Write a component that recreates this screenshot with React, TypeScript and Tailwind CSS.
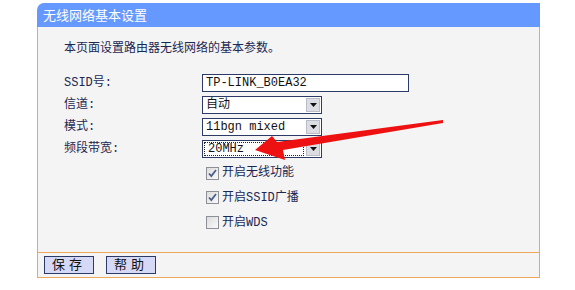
import React from 'react';

const mono = { fontFamily: '"Liberation Mono", "Noto Sans CJK SC", monospace' };

function SelectBox({ value, focused }: { value: string; focused?: boolean }) {
  return (
    <div className="flex h-[18px] w-[120px] items-stretch border border-[#2b3a67] bg-white">
      <div
        className={
          'flex flex-1 items-center pl-[3px] text-[12px] leading-none text-[#111] ' +
          (focused ? 'm-[1px] border border-dotted border-[#222]' : '')
        }
      >
        {value}
      </div>
      <div className="m-[1px] flex w-[14px] items-center justify-center border border-[#b8bcc8] bg-[#dcdde2]">
        <svg width="7" height="4" viewBox="0 0 7 4">
          <path d="M0 0h7L3.5 4z" fill="#111" />
        </svg>
      </div>
    </div>
  );
}

function CheckRow({ label, checked, h }: { label: React.ReactNode; checked?: boolean; h: string }) {
  return (
    <div className={'flex items-center pl-[4px] ' + h}>
      <div className="flex h-[13px] w-[13px] items-center justify-center border border-[#8d9096] bg-gradient-to-br from-[#dcdcdc] to-[#fafafa]">
        {checked && (
          <svg width="9" height="9" viewBox="0 0 9 9">
            <path d="M1 4.5l2.3 2.6L8 1" fill="none" stroke="#4a5a8a" strokeWidth="1.7" />
          </svg>
        )}
      </div>
      <span className="ml-[3px] text-[12px] text-[#1b2852]">{label}</span>
    </div>
  );
}

export default function App() {
  return (
    <div className="relative h-[290px] w-[575px] overflow-hidden bg-white" style={mono}>
      <div className="ml-[37px] mt-[3px] w-[503px]">
        <div
          className="flex h-[24px] items-center rounded-tl-[7px] bg-[#6699ff] pl-[6px] text-[13px] text-white"
          style={{ fontFamily: '"Noto Sans CJK SC", sans-serif' }}
        >
          无线网络基本设置
        </div>
        <div className="h-[225px] border-x border-[#eea65a] bg-[#f4f4f4] pl-[26px] pt-[14px]">
          <div className="text-[12px] leading-[16px] text-[#1b2852]">本页面设置路由器无线网络的基本参数。</div>
          <div className="mt-[15px]">
            <div className="flex h-[22px] items-center">
              <div className="w-[138px] text-[12px] text-[#1b2852]">SSID号:</div>
              <div className="flex h-[18px] w-[207px] items-center border border-[#2b3a67] bg-white pl-[3px] text-[12px] text-[#111]">
                TP-LINK_B0EA32
              </div>
            </div>
            <div className="flex h-[22px] items-center">
              <div className="w-[138px] text-[12px] text-[#1b2852]">信道:</div>
              <SelectBox value="自动" />
            </div>
            <div className="flex h-[22px] items-center">
              <div className="w-[138px] text-[12px] text-[#1b2852]">模式:</div>
              <SelectBox value="11bgn mixed" />
            </div>
            <div className="flex h-[22px] items-center">
              <div className="w-[138px] text-[12px] text-[#1b2852]">频段带宽:</div>
              <SelectBox value="20MHz" focused />
            </div>
            <div className="ml-[138px] mt-[1px]">
              <CheckRow label="开启无线功能" checked h="h-[24px]" />
              <CheckRow label="开启SSID广播" checked h="h-[25px]" />
              <CheckRow label="开启WDS" h="h-[25px]" />
            </div>
          </div>
        </div>
        <div className="flex h-[26px] items-center gap-[12px] border border-[#eea65a] bg-[#f4f4f4] pl-[6px]">
          <button className="h-[18px] w-[50px] border border-[#2b3a67] bg-[#d6d9f5] text-[13px] leading-none tracking-[4px] text-[#111]">
            保存
          </button>
          <button className="h-[18px] w-[50px] border border-[#2b3a67] bg-[#d6d9f5] text-[13px] leading-none tracking-[4px] text-[#111]">
            帮助
          </button>
        </div>
      </div>
      <svg className="pointer-events-none absolute left-0 top-0" width="575" height="290" viewBox="0 0 575 290">
        <path
          d="M255 150 L272 136 L277 142 L443 120 L443 123 L283 150 L285 160 Z"
          fill="#ee1111"
        />
      </svg>
    </div>
  );
}
